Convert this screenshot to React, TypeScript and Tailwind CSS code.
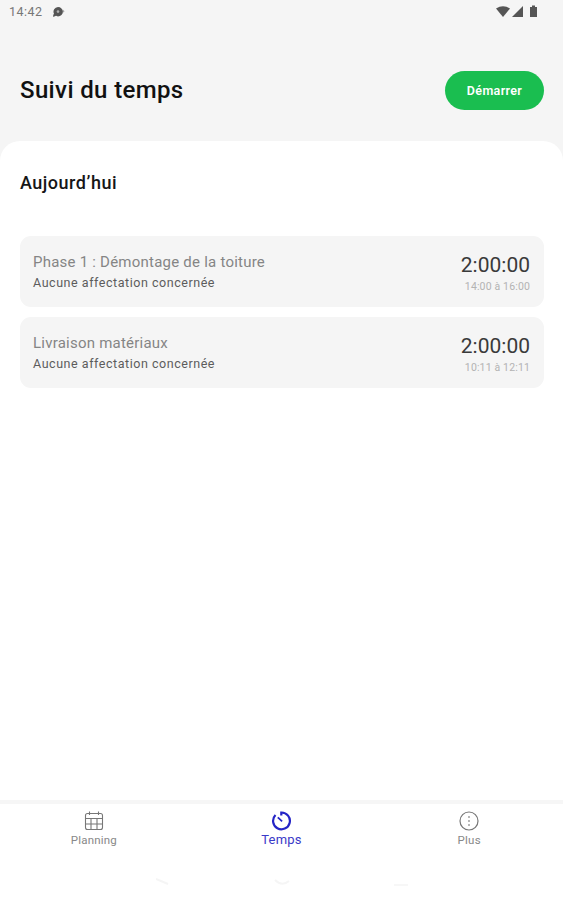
type Entry = { title: string; duration: string; range: string };

const entries: Entry[] = [
  { title: "Phase 1 : Démontage de la toiture", duration: "2:00:00", range: "14:00 à 16:00" },
  { title: "Livraison matériaux", duration: "2:00:00", range: "10:11 à 12:11" },
];

function StatusBar() {
  return (
    <div className="flex h-6 items-center justify-between pl-[9px] pr-[25px] text-[#5b5b5b]">
      <div className="flex items-center gap-[9px]">
        <span className="text-[12.5px] leading-6 tracking-[0.5px] text-[#777777]">14:42</span>
        <svg width="13" height="12" viewBox="0 0 13 12">
          <path d="M10.8 3.5 12.6 5.2 10.8 7Z" fill="#a5a5a5" />
          <path d="M6 1a4.9 4.7 0 0 1 0 9.4L4 9.8 1.2 11V9L2 7.8A4.7 4.7 0 0 1 6 1Z" fill="#555555" />
          <circle cx="6" cy="5.6" r="1.3" fill="#b0b0b0" />
        </svg>
      </div>
      <svg width="42" height="14" viewBox="0 0 42 14" fill="#555555">
        <path d="M0 3.5Q7-1 14 3.5L7 12Z" />
        <path d="M27 1V12H16Z" />
        <path d="M34 2H36V.5H39V2H41V12H34Z" />
      </svg>
    </div>
  );
}

function EntryCard({ title, duration, range }: Entry) {
  return (
    <li className="flex h-[71px] justify-between rounded-[11px] bg-[#f5f5f5] pl-[13px] pr-[14px]">
      <div className="pt-4">
        <p className="text-[15px] leading-5 tracking-[0.23px] text-[#858585]">{title}</p>
        <p className="pt-px text-[12.5px] leading-5 tracking-[0.54px] text-[#5c5c5c]">Aucune affectation concernée</p>
      </div>
      <div className="pt-[17px] text-right">
        <p className="text-[21px] leading-6 text-[#3a3a3a]">{duration}</p>
        <p className="text-[10.5px] leading-5 tracking-[0.15px] text-[#b3b3b3]">{range}</p>
      </div>
    </li>
  );
}

function CalendarIcon() {
  return (
    <svg width="20" height="20" viewBox="0 0 20 20" fill="none" stroke="#777777" strokeWidth="1.1">
      <rect x="1.5" y="2.5" width="17" height="16" rx="2" />
      <path d="M1.5 7.5H18.5M1.5 13H18.5M7 7.5V18.5M13 7.5V18.5M5.5 .5V4M14.5 .5V4" />
    </svg>
  );
}

function TimerIcon() {
  return (
    <svg width="20" height="20" viewBox="0 0 20 20" fill="none" stroke="#2424c6" strokeWidth="2.2">
      <path d="M10.3 4.5V1.5A8.4 8.4 0 1 1 4.5 4" />
      <path d="M6.8 6.3 11.1 10.4" strokeWidth="1.7" />
    </svg>
  );
}

function MoreIcon() {
  return (
    <svg width="20" height="20" viewBox="0 0 20 20">
      <circle cx="10" cy="10" r="9" fill="none" stroke="#777777" strokeWidth="1.2" />
      <path d="M9.3 5.3h1.4v1.4H9.3zM9.3 9.3h1.4v1.4H9.3zM9.3 13.3h1.4v1.4H9.3z" fill="#777777" />
    </svg>
  );
}

export default function App() {
  return (
    <div className="flex h-[900px] w-full flex-col overflow-hidden bg-[#f5f5f5] font-[Roboto,sans-serif]">
      <StatusBar />
      <header className="flex h-[117px] items-center justify-between pl-5 pr-[19px]">
        <h1 className="pt-[14px] text-[24px] font-medium leading-8 tracking-[0.37px] text-[#111111]">Suivi du temps</h1>
        <button className="mt-[15px] h-[39px] w-[99px] rounded-full bg-[#1abe50] pt-[2px] text-[12.5px] font-semibold tracking-[0.35px] text-white">
          Démarrer
        </button>
      </header>
      <main className="flex-1 rounded-t-[20px] bg-white pl-5 pr-[19px]">
        <h2 className="pt-[30px] text-[18px] font-medium leading-6 tracking-[0.5px] text-[#161616]">Aujourd’hui</h2>
        <ul className="mt-[41px] flex flex-col gap-[10px]">
          {entries.map((entry) => (
            <EntryCard key={entry.title} {...entry} />
          ))}
        </ul>
      </main>
      <nav className="grid h-[60px] grid-cols-3 border-t-4 border-[#f6f6f6] bg-white pt-[7px] text-[#888888]">
        <div className="flex flex-col items-center gap-px">
          <CalendarIcon />
          <span className="text-[11.5px] leading-4 tracking-[0.2px]">Planning</span>
        </div>
        <div className="flex flex-col items-center gap-px text-[#3a3ac8]">
          <TimerIcon />
          <span className="text-[13px] leading-4 tracking-[0.25px]">Temps</span>
        </div>
        <div className="flex flex-col items-center gap-px">
          <MoreIcon />
          <span className="text-[11.5px] leading-4 tracking-[0.3px]">Plus</span>
        </div>
      </nav>
      <div className="flex h-10 items-center justify-between bg-white pb-[2px] pl-[156px] pr-[154px] pt-[6px]">
        <svg width="13" height="8" viewBox="0 0 13 8" fill="none" stroke="#f5f5f5" strokeWidth="2">
          <path d="M0 1 12 6" />
        </svg>
        <svg width="16" height="10" viewBox="0 0 16 10" fill="none" stroke="#f5f5f5" strokeWidth="2">
          <path d="M1 3Q8 10 15 4" />
        </svg>
        <svg width="15" height="14" viewBox="0 0 15 14" fill="none" stroke="#f7f7f7" strokeWidth="2">
          <path d="M0 10H14" />
        </svg>
      </div>
    </div>
  );
}
